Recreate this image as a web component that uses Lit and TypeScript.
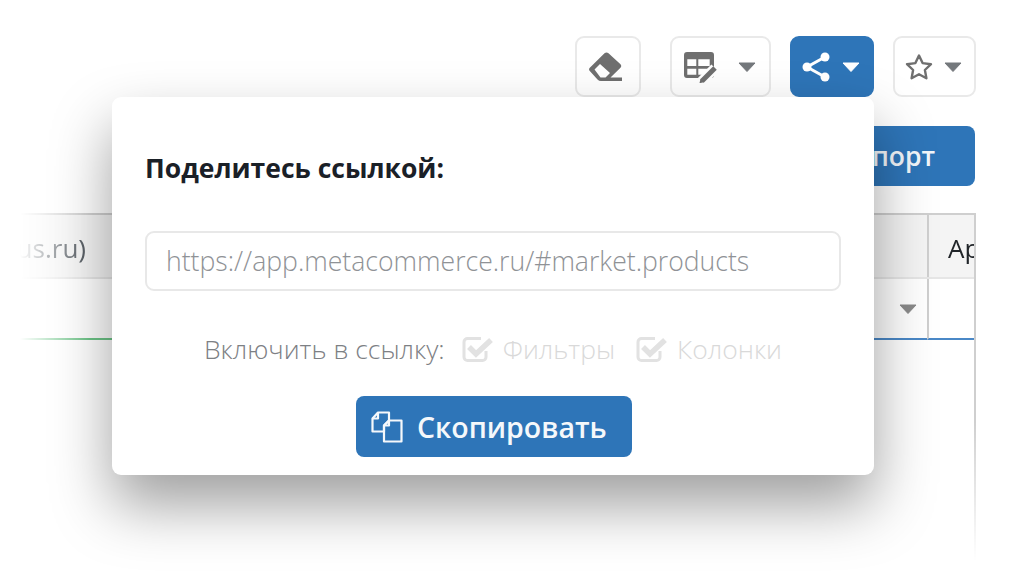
import { customElement } from "lit/decorators.js";
import { html, css, svg, LitElement } from "lit";

const caret = svg`<svg class="caret" width="18" height="10" viewBox="0 0 18 10"><path d="M1 1h16L9 9.500z" fill="currentColor" stroke="currentColor" stroke-linejoin="round"/></svg>`;

const checkIcon = html`<svg class="check" width="32" height="28" viewBox="0 0 32 28">
  <path d="M24 16v6a3.500 3.500 0 0 1-3.500 3.500h-15A3.500 3.500 0 0 1 2 22V7a3.500 3.500 0 0 1 3.500-3.500H19" fill="none" stroke="currentColor" stroke-width="3"/>
  <path d="M7 12l7 7L29 5" fill="none" stroke="currentColor" stroke-width="5.500"/>
</svg>`;

@customElement("app-root")
export class AppRoot extends LitElement {
  static styles = css`
    * {
      box-sizing: border-box;
    }

    :host {
      display: block;
      position: relative;
      height: 588px;
      overflow: hidden;
      background: #fff;
      font-family: "Open Sans", sans-serif;
      color: #212529;
    }

    .toolbar {
      display: flex;
      justify-content: flex-end;
      align-items: center;
      gap: 19px;
      padding: 36px 48px 0 0;
      height: 97px;
    }

    .tool {
      display: flex;
      align-items: center;
      justify-content: center;
      height: 61px;
      padding: 0;
      background: #fff;
      border: 2px solid #e9e9e9;
      border-radius: 9px;
      color: #6f6f6f;
    }

    .tool .caret {
      color: #74787c;
    }

    .eraser {
      width: 66px;
      margin-right: 10px;
      padding-right: 4px;
    }

    .columns {
      width: 101px;
      gap: 20px;
      padding-right: 1px;
    }

    .share {
      width: 84px;
      gap: 12px;
      padding-right: 3px;
      background: #2e75b8;
      border-color: #2e75b8;
      color: #fff;
    }

    .share .caret {
      color: #fff;
    }

    .star {
      width: 83px;
      gap: 11px;
      padding-right: 3px;
    }

    .actions {
      display: flex;
      justify-content: flex-end;
      padding: 29px 49px 0 0;
    }

    .export {
      height: 60px;
      padding: 0 40px 0 60px;
      border: 0;
      border-radius: 8px;
      background: #2e75b8;
      color: #f2f6fa;
      font: 600 26.500px "Open Sans", sans-serif;
    }

    .table {
      margin: 27px 48px 0 0;
      height: 348px;
      border-top: 2px solid #cfcfcf;
      border-right: 2px solid #cfcfcf;
      -webkit-mask-image: linear-gradient(to right, transparent 20px, #000 90px),
        linear-gradient(to bottom, #000 60%, transparent 100%);
      -webkit-mask-composite: source-in;
      mask-image: linear-gradient(to right, transparent 20px, #000 90px),
        linear-gradient(to bottom, #000 60%, transparent 100%);
      mask-composite: intersect;
    }

    .row {
      display: flex;
    }

    .head {
      height: 64px;
      background: #f4f4f4;
      border-bottom: 2px solid #e6e6e6;
      font-size: 26px;
      line-height: 66px;
    }

    .filter {
      height: 61px;
    }

    .cell {
      flex: none;
      overflow: hidden;
      white-space: nowrap;
    }

    .wide {
      flex: 1;
      display: flex;
      justify-content: flex-end;
      align-items: center;
      padding-right: 10px;
    }

    .first {
      width: 86px;
      text-align: right;
      color: #495057;
    }

    .last {
      width: 47px;
      border-left: 2px solid #cfcfcf;
      padding-left: 19px;
    }

    .filter .cell {
      border-bottom: 2px solid #4a88c7;
    }

    .filter .green {
      width: 500px;
      border-bottom-color: #6cc487;
    }

    .filter .caret {
      color: #8a8a8a;
    }

    .popup {
      position: absolute;
      left: 112px;
      top: 97px;
      width: 762px;
      height: 378px;
      padding: 54px 33px 0;
      background: #fff;
      border-radius: 9px;
      box-shadow: 0 30px 60px rgba(0, 0, 0, 0.38);
    }

    .title {
      font-size: 26.500px;
      font-weight: 700;
      line-height: 34px;
      color: #1a2027;
    }

    .link {
      display: block;
      width: 696px;
      height: 60px;
      margin-top: 46px;
      padding: 0 19px;
      border: 2px solid #e8e8e8;
      border-radius: 9px;
      background: #fff;
      color: #8f9296;
      font: 300 26.600px "Open Sans", sans-serif;
      outline: none;
    }

    .options {
      display: flex;
      justify-content: center;
      align-items: center;
      height: 36px;
      margin-top: 40px;
      font-size: 26.500px;
      font-weight: 300;
      color: #7d8084;
    }

    .option {
      display: flex;
      align-items: center;
      gap: 9px;
      margin-left: 17px;
      color: #d9d9d9;
    }

    .option + .option {
      margin-left: 21px;
    }

    .check {
      color: #e2e2e2;
    }

    .copy-row {
      display: flex;
      justify-content: center;
      margin-top: 29px;
    }

    .copy {
      display: flex;
      align-items: center;
      gap: 14px;
      width: 276px;
      height: 61px;
      margin-left: 2px;
      padding: 0 0 0 15px;
      border: 0;
      border-radius: 8px;
      background: #2e75b8;
      color: #f5f8fb;
      font: 600 28.500px "Open Sans", sans-serif;
    }
  `;

  render() {
    return html`
      <div class="toolbar">
        <button class="tool eraser">
          <svg width="34" height="30" viewBox="0 0 34 30">
            <path
              fill="currentColor"
              fill-rule="evenodd"
              d="M.8 15.800 15.500 1.200q2-1.600 4 0l12 11q1.500 1.800 0 3.500L21.500 25.500H33V29H12q-2 0-3.500-1.500L.8 19q-1.500-1.600 0-3.200zM5.500 17.500l5.500-5.500 10 9-4.500 4.500h-5z"
            />
          </svg>
        </button>
        <button class="tool columns">
          <svg width="34" height="32" viewBox="0 0 34 32">
            <path
              fill="currentColor"
              fill-rule="evenodd"
              d="M3 1h24a3 3 0 0 1 3 3v20a3 3 0 0 1-3 3H3a3 3 0 0 1-3-3V4a3 3 0 0 1 3-3zM3.300 8.300v6.700h9v-6.700zM3.300 17.700v6h9v-6zM14.300 8.300v6.700h11.400v-6.700zM14.300 17.700v6h11.400v-6z"
            />
            <path d="M16 32 31 17" fill="none" stroke="#fff" stroke-width="10" />
            <path d="M18 30 31 17" fill="none" stroke="currentColor" stroke-width="5" />
            <path fill="currentColor" d="M15.500 32.200l1-4.500 3.500 3.500z" />
          </svg>
          ${caret}
        </button>
        <button class="tool share">
          <svg width="28" height="30" viewBox="0 0 28 30">
            <path d="M23 5 5 15l18 10" fill="none" stroke="currentColor" stroke-width="3" />
            <circle cx="23" cy="5" r="4.500" fill="currentColor" />
            <circle cx="5" cy="15" r="4.500" fill="currentColor" />
            <circle cx="23" cy="25" r="4.500" fill="currentColor" />
          </svg>
          ${caret}
        </button>
        <button class="tool star">
          <svg width="28" height="27" viewBox="0 0 28 27">
            <path
              d="m14 2.500 3.600 7.600 8.400 1.100-6.100 5.800 1.500 8.300L14 21.300l-7.400 4 1.500-8.300L2 11.200l8.400-1.100z"
              fill="none"
              stroke="currentColor"
              stroke-width="2.400"
              stroke-linejoin="round"
            />
          </svg>
          ${caret}
        </button>
      </div>

      <div class="actions"><button class="export">Экспорт</button></div>

      <div class="table">
        <div class="row head">
          <div class="cell first">us.ru)</div>
          <div class="cell wide"></div>
          <div class="cell last">Ар</div>
        </div>
        <div class="row filter">
          <div class="cell green"></div>
          <div class="cell wide">${caret}</div>
          <div class="cell last"></div>
        </div>
      </div>

      <div class="popup">
        <div class="title">Поделитесь ссылкой:</div>
        <input class="link" readonly value="https://app.metacommerce.ru/#market.products" />
        <div class="options">
          <span>Включить в ссылку:</span>
          <span class="option">${checkIcon}Фильтры</span>
          <span class="option">${checkIcon}Колонки</span>
        </div>
        <div class="copy-row">
          <button class="copy">
            <svg width="32" height="32" viewBox="0 0 32 32" fill="none" stroke="currentColor" stroke-width="2.200" stroke-linejoin="round">
              <path d="M7 1.500h11v8l-5 5v6H1.500V7.500z" />
              <path d="M7 1.500v6H1.500" />
              <path d="M18 9.500h12.500v21H13v-16z" />
              <path d="M18 9.500v5h-5" />
            </svg>
            Скопировать
          </button>
        </div>
      </div>
    `;
  }
}
